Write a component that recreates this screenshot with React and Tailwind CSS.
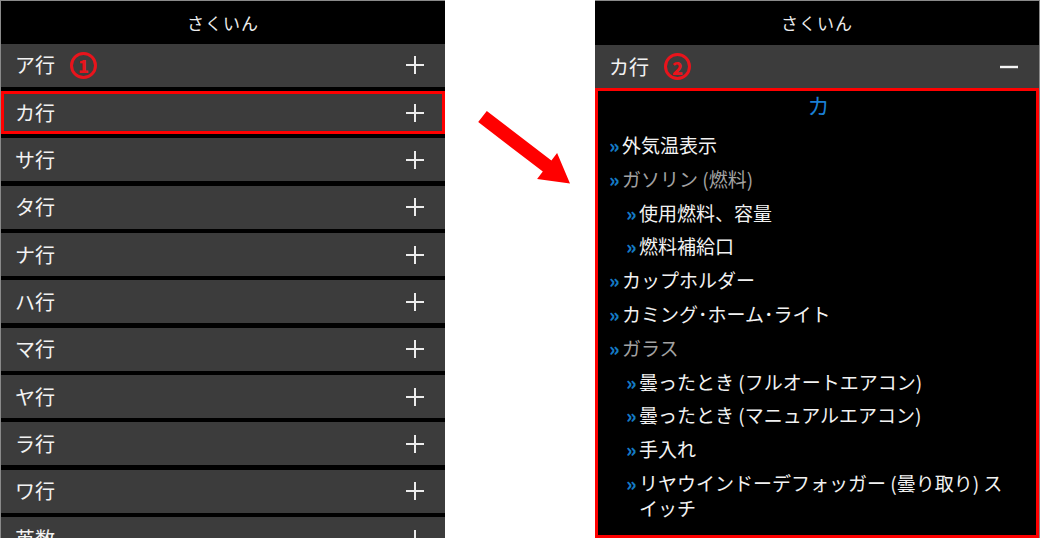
const rows = ["ア行", "カ行", "サ行", "タ行", "ナ行", "ハ行", "マ行", "ヤ行", "ラ行", "ワ行", "英数"]

const items = [
  { text: "外気温表示" },
  { text: "ガソリン (燃料)", dim: true },
  { text: "使用燃料、容量", sub: true },
  { text: "燃料補給口", sub: true },
  { text: "カップホルダー" },
  { text: "カミング･ホーム･ライト" },
  { text: "ガラス", dim: true },
  { text: "曇ったとき (フルオートエアコン)", sub: true },
  { text: "曇ったとき (マニュアルエアコン)", sub: true },
  { text: "手入れ", sub: true },
  { text: "リヤウインドーデフォッガー (曇り取り) ス", wrap: "イッチ", sub: true },
]

const PlusIcon = () => (
  <svg width="20" height="20" viewBox="0 0 20 20" className="shrink-0">
    <line x1="1" y1="10" x2="19" y2="10" stroke="#ececec" strokeWidth="2" />
    <line x1="10" y1="1" x2="10" y2="19" stroke="#ececec" strokeWidth="2" />
  </svg>
)

const MinusIcon = () => (
  <svg width="20" height="20" viewBox="0 0 20 20" className="shrink-0">
    <line x1="1" y1="10" x2="19" y2="10" stroke="#f4f4f4" strokeWidth="2.4" />
  </svg>
)

const Badge = ({ n }) => (
  <span className="ml-[15px] flex h-[27px] w-[27px] items-center justify-center rounded-full border-[3px] border-[#e8141c] text-[18px] font-black leading-none text-[#e8141c]">
    {n}
  </span>
)

const Header = () => (
  <div className="flex h-[44px] items-center justify-center bg-black text-[17px] tracking-[1px] text-[#ececec]">
    さくいん
  </div>
)

const App = () => {
  return (
    <div
      className="flex h-[538px] w-[1040px] overflow-hidden bg-white"
      style={{ fontFamily: '"Noto Sans CJK JP", "Noto Sans", sans-serif' }}
    >
      {/* Left panel: index list */}
      <div className="flex h-[560px] w-[445px] shrink-0 flex-col border-l border-t border-[#8a8a8a] bg-black">
        <Header />
        <div className="flex flex-col gap-[4.33px]">
          {rows.map((r, i) => (
            <div
              key={r}
              className={
                i === 1
                  ? "flex h-[43px] items-center border-[3px] border-[#ff0000] bg-[#3c3c3c] pl-[11px] pr-[17px]"
                  : "flex h-[43px] items-center bg-[#3c3c3c] pl-[14px] pr-[20px]"
              }
            >
              <span className="text-[20px] leading-none text-[#f2f2f2]">{r}</span>
              {i === 0 && <Badge n="1" />}
              <span className="ml-auto" />
              <PlusIcon />
            </div>
          ))}
        </div>
      </div>

      {/* Arrow */}
      <div className="w-[150px] shrink-0">
        <svg width="150" height="200" viewBox="0 0 150 200">
          <polygon
            points="41.8,111 106.4,160.4 112.1,153 125,183.5 92.1,179 97.8,171.6 33.2,122.1"
            fill="#ff0000"
          />
        </svg>
      </div>

      {/* Right panel: expanded section */}
      <div className="flex h-[538px] w-[445px] shrink-0 flex-col border-r border-t border-[#8a8a8a] bg-black">
        <Header />
        <div className="flex h-[43px] items-center bg-[#3c3c3c] pl-[14px] pr-[20px]">
          <span className="text-[20px] leading-none text-[#f2f2f2]">カ行</span>
          <Badge n="2" />
          <span className="ml-auto" />
          <MinusIcon />
        </div>
        <div className="flex-1 overflow-hidden border-[3px] border-[#ff0000] bg-black pl-[11px] pr-[8px]">
          <div className="text-center text-[22px] leading-[26px] text-[#1a7fd4]">カ</div>
          <div className="mt-[15px] flex flex-col gap-[8.8px]">
            {items.map((it, i) => (
              <div
                key={i}
                className={`flex text-[19px] leading-[25px] ${it.sub ? "pl-[17px]" : ""} ${
                  it.dim ? "text-[#a2a2a2]" : "text-[#f2f2f2]"
                }`}
              >
                <span className="w-[13px] shrink-0 text-[19px] font-black text-[#1479c4]">»</span>
                <span>
                  {it.text}
                  {it.wrap && (
                    <>
                      <br />
                      {it.wrap}
                    </>
                  )}
                </span>
              </div>
            ))}
          </div>
          <div className="mt-[10px] text-center text-[22px] leading-[26px] text-[#1a7fd4]">キ</div>
        </div>
      </div>
    </div>
  )
}

export default App
